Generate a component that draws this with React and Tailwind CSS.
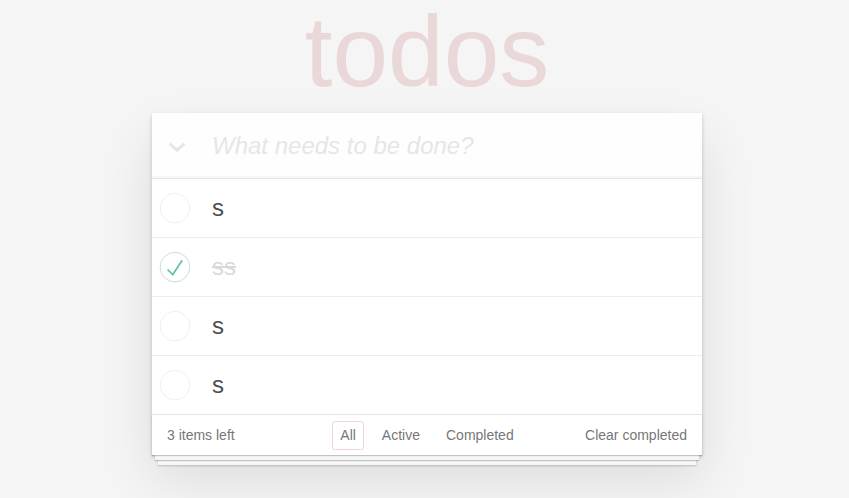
import React from "react";

const todos = [
  { id: 1, title: "s", done: false },
  { id: 2, title: "ss", done: true },
  { id: 3, title: "s", done: false },
  { id: 4, title: "s", done: false },
];

function Toggle({ done }) {
  return (
    <svg width="40" height="40" viewBox="-10 -18 100 135" className="shrink-0">
      <circle cx="50" cy="50" r="50" fill="none" stroke={done ? "#bddad5" : "#ededed"} strokeWidth="3" />
      {done && <path fill="#5dc2af" d="M72 25L42 71 27 56l-4 4 20 20 34-52z" />}
    </svg>
  );
}

export default function App() {
  return (
    <div className="min-h-[498px] bg-[#f5f5f5] font-['Liberation_Sans',Arial,sans-serif] text-[14px] text-[#4d4d4d] flex flex-col items-center pl-[5px]">
      <h1 className="h-[113px] w-[550px] text-center text-[100px] leading-[100px] font-thin text-[rgba(175,47,47,0.15)] pt-[1px]">
        todos
      </h1>
      <section className="w-[550px] bg-white relative shadow-[0_2px_4px_0_rgba(0,0,0,0.2),0_25px_50px_0_rgba(0,0,0,0.1)]">
        <header className="h-[65px] flex items-center bg-[rgba(0,0,0,0.003)] shadow-[inset_0_-2px_1px_rgba(0,0,0,0.03)]">
          <div className="w-[60px] pl-[16px] flex items-center">
            <svg width="18" height="10" viewBox="0 0 18 10" className="mt-[3px]">
              <path d="M1.5 1.5 L9 8.2 L16.5 1.5" fill="none" stroke="#e6e6e6" strokeWidth="3" />
            </svg>
          </div>
          <input
            className="flex-1 h-full pr-4 bg-transparent outline-none text-[24px] font-light placeholder:italic placeholder:text-[#e6e6e6]"
            placeholder="What needs to be done?"
          />
        </header>
        <ul className="border-t border-[#e6e6e6]">
          {todos.map((t, i) => (
            <li
              key={t.id}
              className={`flex items-center ${i < todos.length - 1 ? "h-[59px] border-b border-[#ededed]" : "h-[58px]"}`}
            >
              <div className="w-[60px] flex items-center">
                <Toggle done={t.done} />
              </div>
              <span
                className={`text-[24px] leading-[1.2] ${t.done ? "text-[#d9d9d9] line-through" : "text-[#4d4d4d]"}`}
              >
                {t.title}
              </span>
            </li>
          ))}
        </ul>
        <footer className="h-[41px] px-[15px] border-t border-[#e6e6e6] grid grid-cols-[1fr_auto_1fr] items-center text-[#777] bg-white shadow-[0_1px_1px_rgba(0,0,0,0.2),0_8px_0_-3px_#f6f6f6,0_9px_1px_-3px_rgba(0,0,0,0.2),0_16px_0_-6px_#f6f6f6,0_17px_2px_-6px_rgba(0,0,0,0.2)]">
          <span>3 items left</span>
          <ul className="flex gap-[4px]">
            <li className="m-[3px] px-[7px] py-[3px] border border-[rgba(175,47,47,0.2)] rounded-[3px]">All</li>
            <li className="m-[3px] px-[7px] py-[3px] border border-transparent">Active</li>
            <li className="m-[3px] px-[7px] py-[3px] border border-transparent">Completed</li>
          </ul>
          <span className="justify-self-end">Clear completed</span>
        </footer>
      </section>
    </div>
  );
}
